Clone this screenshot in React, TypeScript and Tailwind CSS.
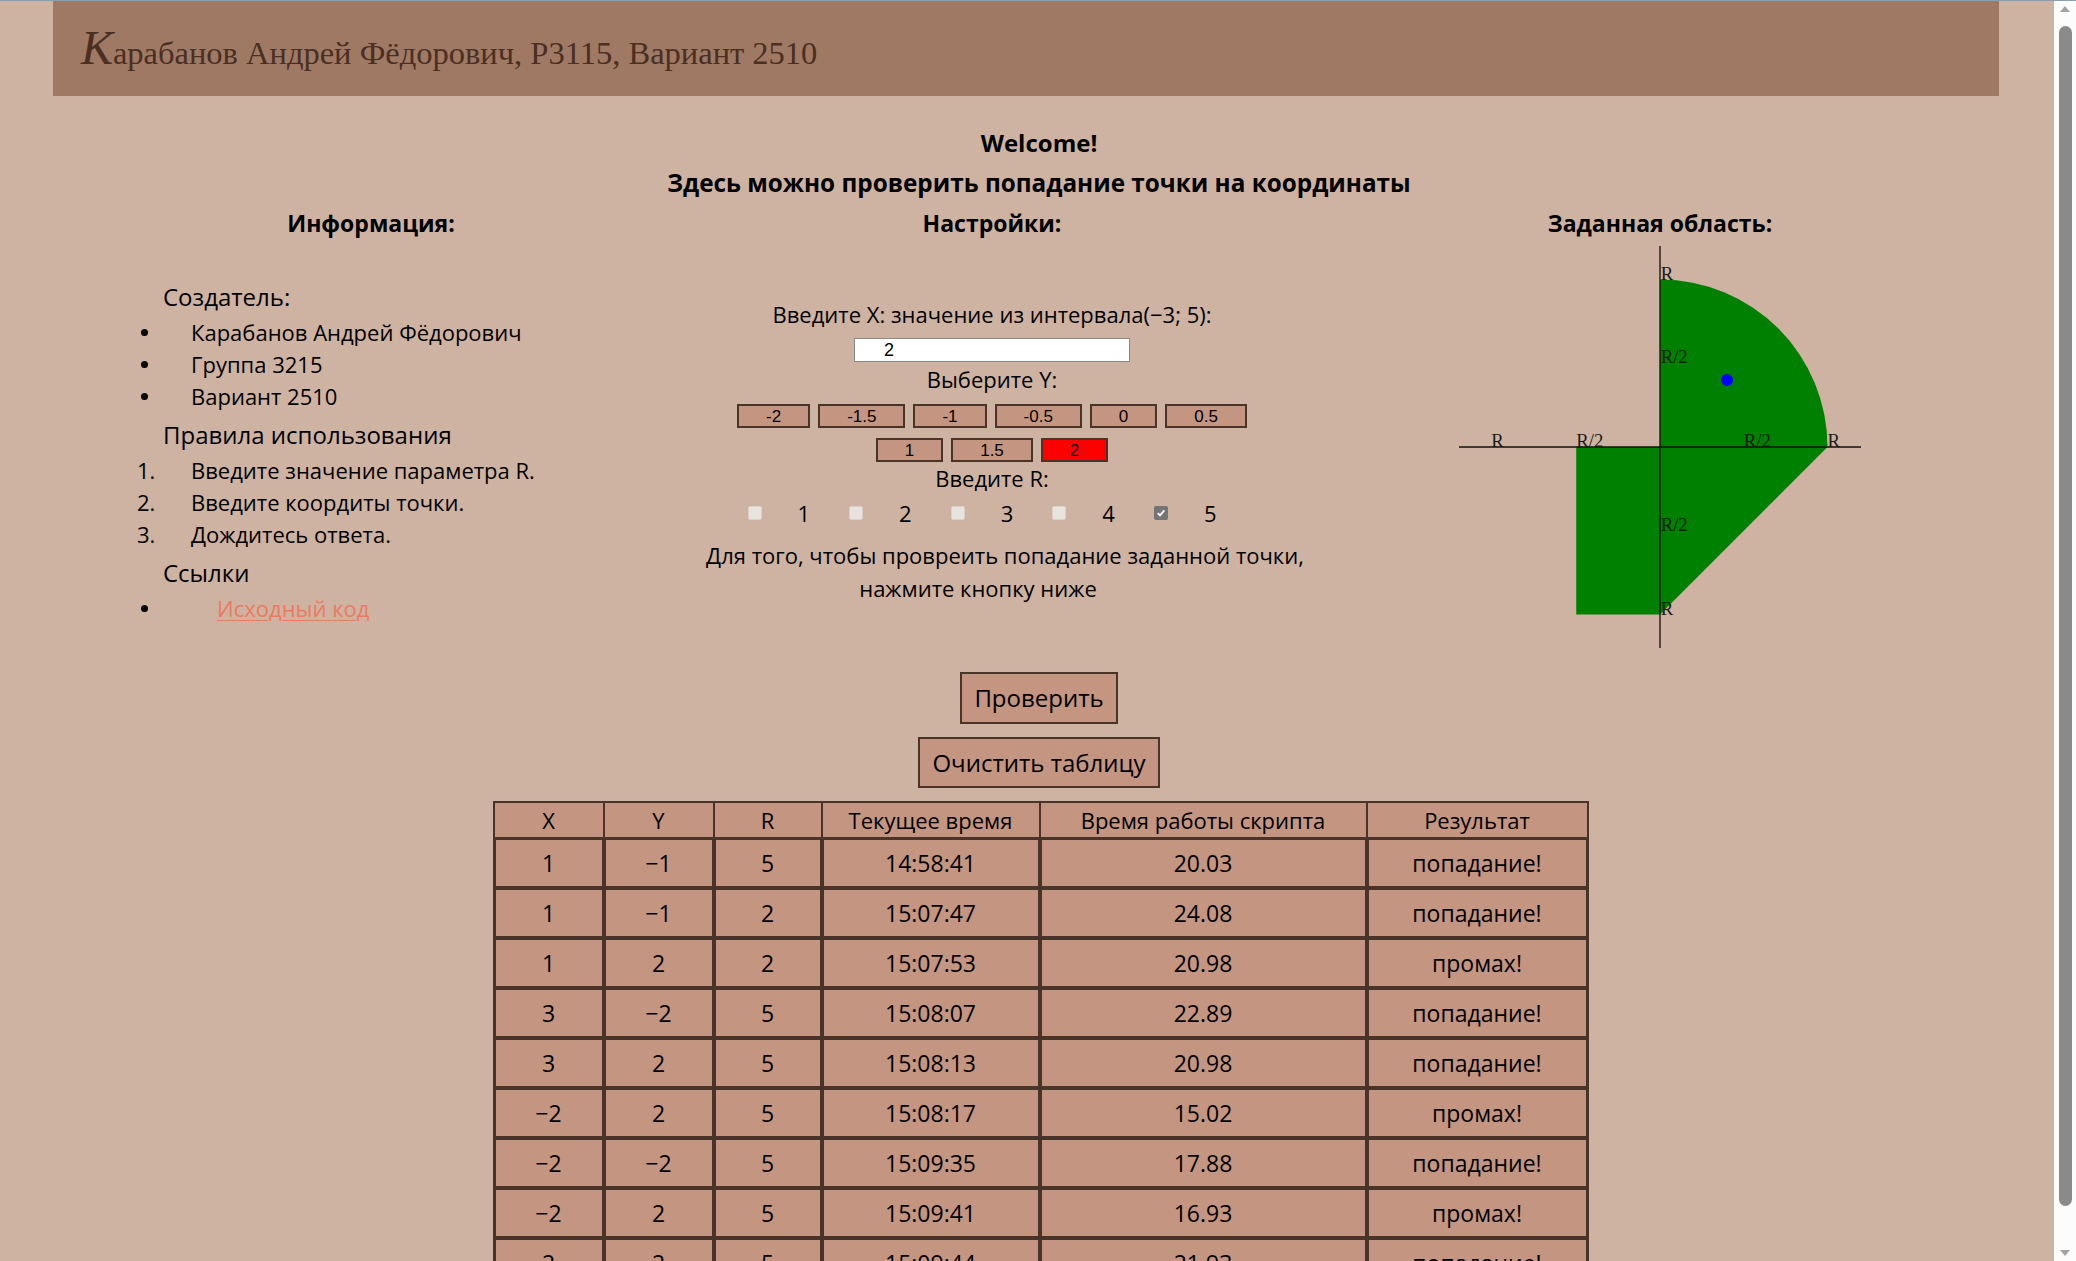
import React from "react";

const rows: string[][] = [
  ["1", "−1", "5", "14:58:41", "20.03", "попадание!"],
  ["1", "−1", "2", "15:07:47", "24.08", "попадание!"],
  ["1", "2", "2", "15:07:53", "20.98", "промах!"],
  ["3", "−2", "5", "15:08:07", "22.89", "попадание!"],
  ["3", "2", "5", "15:08:13", "20.98", "попадание!"],
  ["−2", "2", "5", "15:08:17", "15.02", "промах!"],
  ["−2", "−2", "5", "15:09:35", "17.88", "попадание!"],
  ["−2", "2", "5", "15:09:41", "16.93", "промах!"],
  ["2", "2", "5", "15:09:44", "21.93", "попадание!"],
  ["2", "2", "5", "15:09:50", "18.12", "попадание!"],
];

const yRow1 = ["-2", "-1.5", "-1", "-0.5", "0", "0.5"];
const yRow2 = ["1", "1.5", "2"];

function YButton({ v }: { v: string }) {
  const selected = v === "2";
  return (
    <button
      className={
        selected
          ? "h-[24px] border-2 border-[#4a3429] bg-[#ff0000] px-[27px] font-['Liberation_Sans',Arial,sans-serif] text-[17px] leading-none text-black"
          : "h-[24px] border-2 border-[#4a3429] bg-[#c49580] px-[27px] font-['Liberation_Sans',Arial,sans-serif] text-[17px] leading-none text-black"
      }
    >
      {v}
    </button>
  );
}

function Checkbox({ checked }: { checked: boolean }) {
  if (checked) {
    return (
      <span className="flex h-[14px] w-[14px] items-center justify-center rounded-[2px] bg-[#747474]">
        <svg width="10" height="10" viewBox="0 0 10 10">
          <path d="M1.8 5.2 L4 7.4 L8.3 2.4" fill="none" stroke="#fff" strokeWidth="1.8" />
        </svg>
      </span>
    );
  }
  return <span className="block h-[14px] w-[14px] rounded-[2px] border border-[#d9d1cc] bg-[#e9e3e0]" />;
}

function Bullet({ children, link }: { children: React.ReactNode; link?: boolean }) {
  return (
    <div className="flex h-[32px] items-center">
      <span className="flex w-[54px] items-center">
        <span className="ml-[4px] block h-[7px] w-[7px] rounded-full bg-black" />
      </span>
      {link ? (
        <a href="#" className="ml-[26px] text-[#ec7a5f] underline decoration-1 underline-offset-[3px]">
          {children}
        </a>
      ) : (
        <span>{children}</span>
      )}
    </div>
  );
}

function Numbered({ n, children }: { n: number; children: React.ReactNode }) {
  return (
    <div className="flex h-[32px] items-center">
      <span className="w-[54px]">{n}.</span>
      <span>{children}</span>
    </div>
  );
}

function Graph() {
  return (
    <svg width="402" height="402" viewBox="0 0 300 300" className="mx-auto mt-[3px] block">
      <path d="M150 150 L150 25 A125 125 0 0 1 275 150 Z" fill="#008000" />
      <rect x="87.5" y="150" width="62.5" height="125" fill="#008000" />
      <path d="M150 150 L275 150 L150 275 Z" fill="#008000" />
      <line x1="0" y1="150" x2="300" y2="150" stroke="#111" strokeWidth="1" />
      <line x1="150" y1="0" x2="150" y2="300" stroke="#111" strokeWidth="1" />
      <g fontFamily="'Liberation Serif', serif" fontSize="14" fill="#1a1a1a">
        <text x="24" y="150">R</text>
        <text x="87.5" y="150">R/2</text>
        <text x="212.5" y="150">R/2</text>
        <text x="275" y="150">R</text>
        <text x="150.5" y="25">R</text>
        <text x="150.5" y="87.5">R/2</text>
        <text x="150.5" y="212.5">R/2</text>
        <text x="150.5" y="275">R</text>
      </g>
      <circle cx="200" cy="100" r="4.5" fill="#0000ff" />
    </svg>
  );
}

function Scrollbar() {
  return (
    <div className="flex h-full w-[22px] shrink-0 flex-col items-center bg-[#fcfcfc]">
      <svg className="mt-[5px] block" width="10" height="6" viewBox="0 0 10 6">
        <path d="M5 0 L10 6 L0 6 Z" fill="#a3a3a3" />
      </svg>
      <div className="mt-[14px] h-[1180px] w-[13px] rounded-full bg-[#8a8a8a]" />
      <div className="flex-1" />
      <svg className="mb-[5px] block" width="10" height="6" viewBox="0 0 10 6">
        <path d="M0 0 L10 0 L5 6 Z" fill="#a3a3a3" />
      </svg>
    </div>
  );
}

export default function App() {
  return (
    <div className="flex h-[1261px] w-[2076px] overflow-hidden border-t border-[#8aa0b2] bg-[#cfb3a2] font-['Open_Sans',sans-serif] text-black">
      <div className="h-full w-[2054px] shrink-0 overflow-hidden">
        <header className="ml-[53px] flex h-[95px] w-[1946px] items-baseline bg-[#9f7964] pl-[28px] pt-[23px] font-['Liberation_Serif',serif] leading-none text-[#4a2f22]">
          <span className="text-[48px] italic">К</span>
          <span className="text-[32.5px]">арабанов Андрей Фёдорович, P3115, Вариант 2510</span>
        </header>

        <main className="pl-[24px]">
          <h1 className="mt-[27px] text-center text-[24px] font-bold leading-[40px]">Welcome!</h1>
          <h2 className="text-center text-[24.3px] font-bold leading-[40px]">
            Здесь можно проверить попадание точки на координаты
          </h2>

          <div className="grid grid-cols-[694px_548px_788px]">
            {/* Info column */}
            <div>
              <h3 className="text-center text-[23px] font-bold leading-[40px]">Информация:</h3>
              <div className="mt-[38px] pl-[113px] text-[22px]">
                <div className="mb-[3px] h-[32px] pl-[26px] text-[24px] leading-[32px]">Создатель:</div>
                <Bullet>Карабанов Андрей Фёдорович</Bullet>
                <Bullet>Группа 3215</Bullet>
                <Bullet>Вариант 2510</Bullet>
                <div className="mb-[3px] mt-[7px] h-[32px] pl-[26px] text-[24px] leading-[32px]">
                  Правила использования
                </div>
                <Numbered n={1}>Введите значение параметра R.</Numbered>
                <Numbered n={2}>Введите коордиты точки.</Numbered>
                <Numbered n={3}>Дождитесь ответа.</Numbered>
                <div className="mb-[3px] mt-[7px] h-[32px] pl-[26px] text-[24px] leading-[32px]">Ссылки</div>
                <Bullet link>Исходный код</Bullet>
              </div>
            </div>

            {/* Settings column */}
            <div className="flex flex-col items-center text-[22px]">
              <h3 className="text-center text-[23px] font-bold leading-[40px]">Настройки:</h3>
              <div className="mt-[57px] whitespace-nowrap leading-[28px]">
                Введите X: значение из интервала(−3; 5):
              </div>
              <input
                readOnly
                value="2"
                className="mt-[10px] h-[24px] w-[276px] border border-[#8a8a8a] bg-white pl-[29px] font-['Liberation_Sans',Arial,sans-serif] text-[18px] text-black outline-none"
              />
              <div className="mt-[3px] leading-[28px]">Выберите Y:</div>
              <div className="mt-[11px] flex justify-center gap-[8px]">
                {yRow1.map((v) => (
                  <YButton key={v} v={v} />
                ))}
              </div>
              <div className="mt-[10px] flex justify-center gap-[8px]">
                {yRow2.map((v) => (
                  <YButton key={v} v={v} />
                ))}
              </div>
              <div className="mt-[2px] leading-[28px]">Введите R:</div>
              <div className="mr-[20px] mt-[7px] flex h-[28px] items-center justify-center gap-[39px]">
                {[1, 2, 3, 4, 5].map((n) => (
                  <div key={n} className="flex items-center gap-[36px]">
                    <Checkbox checked={n === 5} />
                    <span className="leading-[28px]">{n}</span>
                  </div>
                ))}
              </div>
              <div className="mt-[12px] flex flex-col items-center whitespace-nowrap leading-[33px]">
                <span className="ml-[26px]">Для того, чтобы провреить попадание заданной точки,</span>
                <span className="mr-[28px]">нажмите кнопку ниже</span>
              </div>
            </div>

            {/* Area column */}
            <div>
              <h3 className="text-center text-[23px] font-bold leading-[40px]">Заданная область:</h3>
              <Graph />
            </div>
          </div>

          <div className="mt-[24px] flex flex-col items-center gap-[13px]">
            <button className="h-[52px] border-2 border-[#4a3429] bg-[#c49580] px-[12px] text-[24px] text-black">
              Проверить
            </button>
            <button className="h-[51px] border-2 border-[#4a3429] bg-[#c49580] px-[12px] text-[24px] text-black">
              Очистить таблицу
            </button>
          </div>

          <div className="pl-[3px]">
            <table className="mx-auto mt-[13px] w-[1094px] table-fixed border-separate border-spacing-0 border border-[#4a3429] bg-[#c49580] text-center">
              <colgroup>
                <col className="w-[110px]" />
                <col className="w-[110px]" />
                <col className="w-[108px]" />
                <col className="w-[218px]" />
                <col className="w-[327px]" />
                <col className="w-[221px]" />
              </colgroup>
              <thead>
                <tr>
                  {["X", "Y", "R", "Текущее время", "Время работы скрипта", "Результат"].map((h) => (
                    <th key={h} className="h-[36px] border border-[#4a3429] p-0 text-[22px] font-normal">
                      {h}
                    </th>
                  ))}
                </tr>
              </thead>
              <tbody>
                {rows.map((r, i) => (
                  <tr key={i}>
                    {r.map((c, j) => (
                      <td key={j} className="h-[50px] border-2 border-[#4a3429] p-0 text-[23px]">
                        {c}
                      </td>
                    ))}
                  </tr>
                ))}
              </tbody>
            </table>
          </div>
        </main>
      </div>
      <Scrollbar />
    </div>
  );
}
